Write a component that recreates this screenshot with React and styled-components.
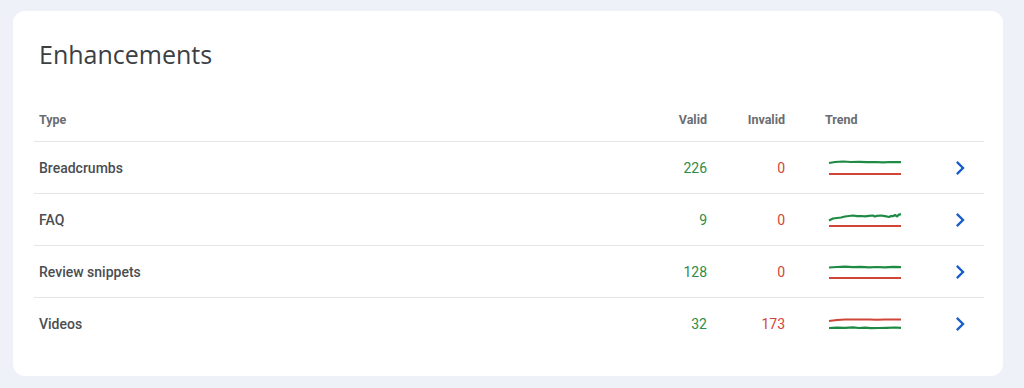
import React from 'react';
import styled, {createGlobalStyle} from 'styled-components';

const rows = [
    {
        type: 'Breadcrumbs', valid: 226, invalid: 0,
        green: '0,5 6,4 14,3.5 22,4 30,3.8 38,4.2 46,4 54,4.4 62,4 72,4.2',
        red: '0,16 72,16',
    },
    {
        type: 'FAQ', valid: 9, invalid: 0,
        green: '0,10.5 4,8.5 8,8 12,7.5 16,6.5 20,6 24,5.5 28,6.2 32,6 36,6.4 40,5.8 44,5.5 46,6.6 48,5.8 52,5.5 56,6.2 60,7 62,6 64,6.2 66,5 68,6.4 70,4.6 72,4.2',
        red: '0,16 72,16',
    },
    {
        type: 'Review snippets', valid: 128, invalid: 0,
        green: '0,5.5 8,5 16,4.7 24,5.1 32,4.9 40,5.3 48,5 56,5.3 64,4.8 72,5.1',
        red: '0,16 72,16',
    },
    {
        type: 'Videos', valid: 32, invalid: 173,
        green: '0,14 8,13.6 16,13.8 24,13.4 30,14 36,13.6 42,14.2 50,14 58,13.8 66,13.5 72,13.8',
        red: '0,7 8,6 16,5.5 24,5.4 32,5.6 40,5.5 48,5.8 56,5.6 64,5.4 72,5.5',
    },
];

const GlobalStyle = createGlobalStyle`
  body {
    margin: 0;
    background: #eef2f8;
    font-family: Roboto, "Liberation Sans", sans-serif;
  }
`;

const Page = styled.div`
  padding: 11px 21px 12px 13px;
  height: 388px;
  box-sizing: border-box;
`;

const Card = styled.div`
  background: #ffffff;
  border-radius: 12px;
  padding: 28px 19px 0 21px;
  height: 365px;
  box-sizing: border-box;
`;

const Title = styled.h1`
  margin: 0 0 0 5px;
  font-family: "Open Sans", Roboto, sans-serif;
  font-weight: 400;
  font-size: 25px;
  line-height: 30px;
  color: #3c4043;
  letter-spacing: 0;
`;

const Table = styled.div`
  margin-top: 29px;
`;

const Row = styled.div`
  display: grid;
  grid-template-columns: 1fr 68px 78px 149px 50px;
  align-items: center;
  height: ${p => (p.$head ? '44px' : '52px')};
  box-sizing: border-box;
  border-bottom: ${p => (p.$last ? 'none' : '1px solid #e3e5e8')};
`;

const Head = styled.div`
  font-size: 12.5px;
  font-weight: 700;
  color: #6a6d71;
  text-align: ${p => p.$align || 'left'};
  padding-left: ${p => p.$pad || 0}px;
  margin-top: -1px;
`;

const TypeCell = styled.div`
  padding-left: 5px;
  font-size: 14px;
  font-weight: 500;
  color: #4a4d51;
`;

const Num = styled.div`
  text-align: right;
  font-size: 14px;
  color: ${p => (p.$bad ? '#d5443a' : '#2e8c47')};
`;

const Trend = styled.div`
  padding-left: 43px;
  display: flex;
  align-items: center;
`;

const Chevron = styled.div`
  display: flex;
  justify-content: center;
  padding-left: 2px;
  color: #1a5fc8;
`;

function Spark({green, red}) {
    return (
        <svg width="74" height="20" viewBox="-1 0 74 20">
            <polyline points={green} fill="none" stroke="#1e8a44" strokeWidth="2.2" strokeLinejoin="round"/>
            <polyline points={red} fill="none" stroke="#cf4537" strokeWidth="2"/>
        </svg>
    );
}

export default function App() {
    return (
        <>
            <GlobalStyle/>
            <Page>
                <Card>
                    <Title>Enhancements</Title>
                    <Table>
                        <Row $head>
                            <Head $pad={5}>Type</Head>
                            <Head $align="right">Valid</Head>
                            <Head $align="right">Invalid</Head>
                            <Head $pad={40}>Trend</Head>
                            <div/>
                        </Row>
                        {rows.map((r, i) => (
                            <Row key={r.type} $last={i === rows.length - 1}>
                                <TypeCell>{r.type}</TypeCell>
                                <Num>{r.valid}</Num>
                                <Num $bad>{r.invalid}</Num>
                                <Trend>
                                    <Spark green={r.green} red={r.red}/>
                                </Trend>
                                <Chevron>
                                    <svg width="28" height="28" viewBox="0 0 24 24" fill="currentColor">
                                        <path d="M10 6L8.59 7.41 13.17 12l-4.58 4.59L10 18l6-6z"/>
                                    </svg>
                                </Chevron>
                            </Row>
                        ))}
                    </Table>
                </Card>
            </Page>
        </>
    );
}
